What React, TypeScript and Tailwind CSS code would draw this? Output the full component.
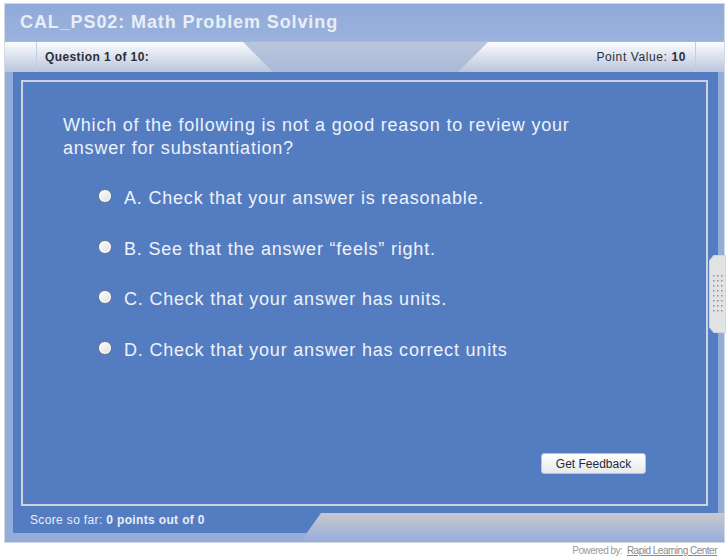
import React from "react";

const options = [
  "A. Check that your answer is reasonable.",
  "B. See that the answer \u201cfeels\u201d right.",
  "C. Check that your answer has units.",
  "D. Check that your answer has correct units",
];

function Radio() {
  return (
    <div className="mt-[2px] w-[14px] h-[14px] rounded-full border border-[#6f7784] bg-gradient-to-br from-white to-[#dcdfe4] shadow-[inset_0_0_0_1px_#ffffff]" />
  );
}

function Handle() {
  const rows = [0, 1, 2, 3, 4, 5, 6, 7];
  const cols = [0, 1, 2];
  return (
    <div className="absolute left-[704px] top-[251px] w-[17px] h-[78px]">
      <svg width="17" height="78" viewBox="0 0 17 78">
        <polygon points="5,0 17,0 17,78 5,78 0,72 0,6" fill="#e2e3e5" stroke="#c2c6cc" strokeWidth="1" />
        {rows.map((r) =>
          cols.map((c) => (
            <rect key={`${r}-${c}`} x={4 + c * 4} y={20 + r * 5} width="1.5" height="1.5" fill="#8a8f98" />
          ))
        )}
      </svg>
    </div>
  );
}

export default function App() {
  return (
    <div className="w-[728px] h-[557px] bg-white font-['Liberation_Sans',Arial,sans-serif] overflow-hidden">
      <div className="relative ml-[4px] mt-[3px] w-[721px] h-[540px] border border-[#d3d9e2] bg-[#93acd9] flex flex-col">
        {/* Title */}
        <div className="h-[37px] shrink-0 flex items-center pl-[15px] text-[18px] font-bold tracking-[0.9px] text-[#e9eef8] bg-gradient-to-b from-[#90aad9] to-[#9ab2dc]">
          CAL_PS02: Math Problem Solving
        </div>
        {/* Header band */}
        <div className="h-[31px] shrink-0 flex bg-gradient-to-b from-[#b9c6de] to-[#aab9d6] border-t border-[#a9bad9]">
          <div className="w-[31px] bg-gradient-to-b from-[#fbfcfd] to-[#bac6dd]" />
          <div className="w-px bg-[#c6cedb]" />
          <div className="w-[236px] flex items-center pl-[8px] text-[12px] font-bold tracking-[0.4px] text-[#2b2f36] bg-gradient-to-b from-[#fbfcfd] to-[#bac6dd] [clip-path:polygon(0_0,206px_0,100%_100%,0_100%)]">
            Question 1 of 10:
          </div>
          <div className="flex-1" />
          <div className="w-[237px] flex items-center justify-end pr-[9px] text-[12px] tracking-[0.6px] text-[#2b2f36] bg-gradient-to-b from-[#fbfcfd] to-[#bac6dd] [clip-path:polygon(30px_0,100%_0,100%_100%,0_100%)]">
            Point Value:&nbsp;<span className="font-bold">10</span>
          </div>
          <div className="w-px bg-[#c6cedb]" />
          <div className="w-[28px] bg-gradient-to-b from-[#fbfcfd] to-[#bac6dd]" />
        </div>
        {/* Body */}
        <div className="flex-1 flex flex-col">
          <div className="ml-[8px] mr-[6px] h-[461px] bg-[#547dc1] flex flex-col">
            <div className="mt-[8px] ml-[8px] mr-[10px] h-[426px] border-2 border-[#cdd3dc] flex flex-col pl-[40px] pt-[32px] text-[#eef2fa]">
              <div className="text-[18px] leading-[23px] tracking-[0.8px]">
                Which of the following is not a good reason to review your
                <br />
                answer for substantiation?
              </div>
              <div className="mt-[27px] ml-[35px] flex flex-col gap-[27.6px]">
                {options.map((o) => (
                  <div key={o} className="flex items-start">
                    <Radio />
                    <span className="ml-[12px] text-[18px] leading-[23px] tracking-[0.8px]">{o}</span>
                  </div>
                ))}
              </div>
              <div className="flex-1" />
              <div className="flex justify-end pr-[60px] pb-[30px]">
                <div className="w-[105px] h-[21px] rounded-[3px] border border-[#b9c3d2] bg-gradient-to-b from-white to-[#e6e8ec] flex items-center justify-center text-[12px] text-[#1d2b38]">
                  Get Feedback
                </div>
              </div>
            </div>
            <div className="h-[27px] flex items-center pl-[17px] text-[12px] tracking-[0.35px] text-[#e9eef8]">
              Score so far:&nbsp;<span className="font-bold">0 points out of 0</span>
            </div>
          </div>
          <div className="-mt-[20px] ml-auto w-[423px] h-[28px] bg-gradient-to-b from-[#c8c9cd] to-[#97aedb] [clip-path:polygon(20px_0,100%_0,100%_100%,0_100%)]" />
        </div>
        <Handle />
      </div>
      <div className="flex justify-end pr-[11px] mt-[1px] text-[10px] leading-[13px] tracking-[-0.5px] text-[#9a9a9a]">
        Powered by:&nbsp;&nbsp;<span className="underline text-[#8a8a8a]">Rapid Learning Center</span>
      </div>
    </div>
  );
}
